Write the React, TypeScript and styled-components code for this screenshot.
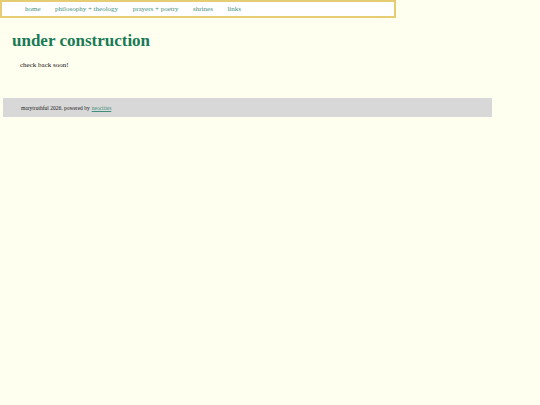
import React from 'react';
import styled, { createGlobalStyle } from 'styled-components';

const GlobalStyle = createGlobalStyle`
  html, body {
    margin: 0;
    padding: 0;
    background: #fffff0;
    font-family: "Liberation Serif", "Times New Roman", serif;
  }
`;

const Page = styled.div`
  width: 540px;
  min-height: 405px;
  background: #fffff0;
`;

const Nav = styled.nav`
  width: 396px;
  height: 18px;
  box-sizing: border-box;
  border: 2px solid #e6cd73;
  background: #ffffff;
  display: flex;
  align-items: center;
  gap: 14.5px;
  padding-left: 23px;
`;

const NavLink = styled.a`
  color: #3f8f7d;
  font-size: 7px;
  text-decoration: none;
  line-height: 1;
`;

const Main = styled.main`
  padding: 14px 0 0 12px;
`;

const Title = styled.h1`
  margin: 0;
  color: #1a7a56;
  font-size: 17px;
  font-weight: 700;
  line-height: 1;
`;

const Body = styled.p`
  margin: 13px 0 0 8px;
  font-size: 7px;
  line-height: 1;
  color: #111;
`;

const Footer = styled.footer`
  margin: 29px 0 0 3px;
  width: 489px;
  height: 19px;
  background: #d8d8d8;
  display: flex;
  align-items: center;
  padding-left: 18px;
  box-sizing: border-box;
  font-size: 5.5px;
  color: #222;
`;

const FooterLink = styled.a`
  color: #3f8f7d;
  margin-left: 2px;
`;

const links = ['home', 'philosophy + theology', 'prayers + poetry', 'shrines', 'links'];

export default function App() {
  return (
    <Page>
      <GlobalStyle />
      <Nav>
        {links.map((l) => (
          <NavLink key={l} href="#">
            {l}
          </NavLink>
        ))}
      </Nav>
      <Main>
        <Title>under construction</Title>
        <Body>check back soon!</Body>
      </Main>
      <Footer>
        marytruthful 2026. powered by<FooterLink href="#">neocities</FooterLink>
      </Footer>
    </Page>
  );
}
